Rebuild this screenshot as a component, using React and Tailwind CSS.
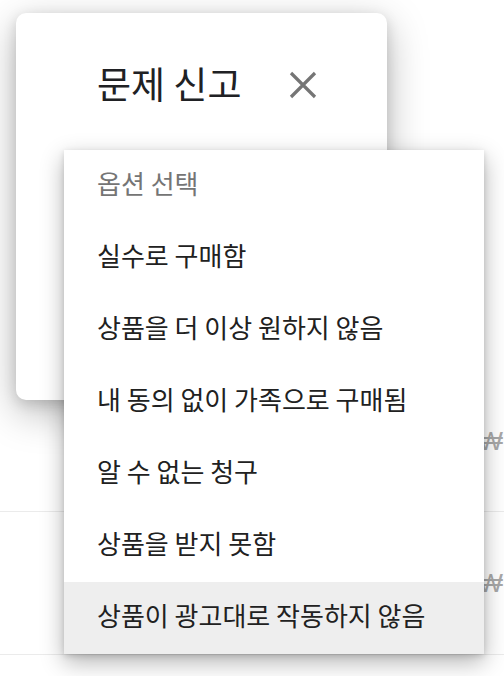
import React from "react";

const options = [
  "실수로 구매함",
  "상품을 더 이상 원하지 않음",
  "내 동의 없이 가족으로 구매됨",
  "알 수 없는 청구",
  "상품을 받지 못함",
  "상품이 광고대로 작동하지 않음",
];

function CloseIcon() {
  return (
    <svg width="28" height="28" viewBox="0 0 28 28" fill="none">
      <path d="M2 2 L26 26 M26 2 L2 26" stroke="#757575" strokeWidth="3.2" strokeLinecap="butt" />
    </svg>
  );
}

export default function App() {
  return (
    <div
      className="relative w-[504px] h-[676px] overflow-hidden bg-white"
      style={{ fontFamily: '"Noto Sans CJK KR", "Noto Sans", sans-serif' }}
    >
      {/* purchase history behind the dialog */}
      <div className="flex flex-col pt-[370px]">
        <div className="h-[142px] flex items-center justify-end border-b border-[#ebebeb] pr-[1px]">
          <span className="text-[26px] leading-none text-[#a8a8a8]" style={{ fontFamily: '"Liberation Sans", sans-serif' }}>₩</span>
        </div>
        <div className="h-[143px] flex items-center justify-end border-b border-[#ebebeb] pr-[1px]">
          <span className="text-[26px] leading-none text-[#a8a8a8]" style={{ fontFamily: '"Liberation Sans", sans-serif' }}>₩</span>
        </div>
      </div>

      {/* report dialog */}
      <div className="absolute left-[16px] top-[13px] w-[371px] h-[387px] rounded-[10px] bg-white shadow-[0_12px_40px_rgba(0,0,0,0.28),0_4px_14px_rgba(0,0,0,0.14)]">
        <div className="flex items-center pl-[81px] pt-[49px]">
          <h1 className="text-[37px] leading-[42px] text-[#202124] font-normal">문제 신고</h1>
          <button className="ml-[48px] mt-[4px] flex items-center">
            <CloseIcon />
          </button>
        </div>
      </div>

      {/* reason dropdown */}
      <div className="absolute left-[64px] top-[150px] w-[420px] bg-white shadow-[0_8px_22px_rgba(0,0,0,0.3),0_2px_6px_rgba(0,0,0,0.14)]">
        <div className="h-[72px] flex items-center pl-[33px] pb-[7px] text-[26px] text-[#757575]">옵션 선택</div>
        {options.map((label, i) => (
          <div
            key={label}
            className={
              i === options.length - 1
                ? "h-[72px] flex items-center pl-[33px] pb-[7px] text-[26px] text-[#212121] bg-[#eeeeee]"
                : "h-[72px] flex items-center pl-[33px] pb-[7px] text-[26px] text-[#212121]"
            }
          >
            {label}
          </div>
        ))}
      </div>
    </div>
  );
}
